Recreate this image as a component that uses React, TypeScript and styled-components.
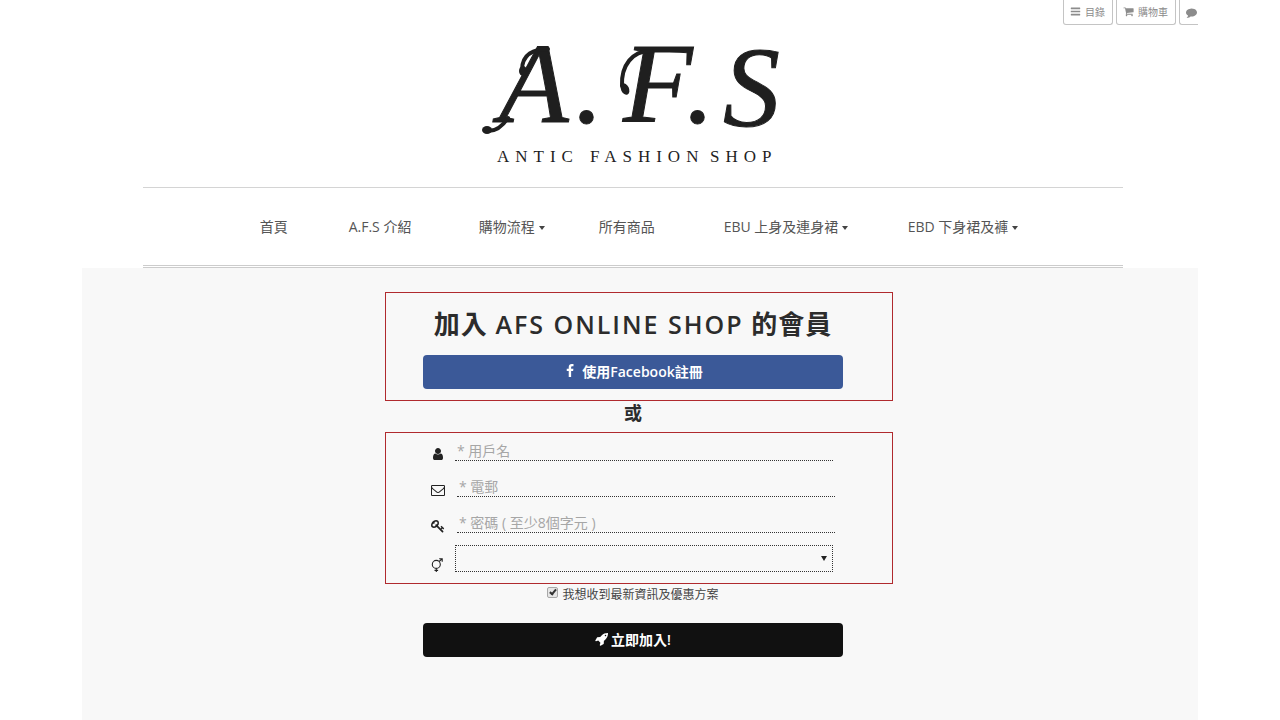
import React from "react";
import styled, { createGlobalStyle } from "styled-components";

const GlobalStyle = createGlobalStyle`
  *, *::before, *::after { box-sizing: border-box; }
  body {
    margin: 0;
    background: #fff;
    color: #333;
    font-family: "Open Sans", "Noto Sans CJK TC", sans-serif;
    font-size: 14px;
  }
  button, input, select { font-family: inherit; }
`;

const Frame = styled.div`
  display: flex;
  flex-direction: column;
  width: calc(100% - 164px);
  min-height: 100vh;
  margin: 0 auto;
`;

const Toolbar = styled.div`
  display: flex;
  justify-content: flex-end;
  gap: 3px;
  overflow: hidden;
`;

const ToolButton = styled.button<{ $cut?: boolean }>`
  display: flex;
  align-items: center;
  gap: 4px;
  height: 25px;
  padding: 0 7px 2px 6px;
  border: 1px solid #c4c4c4;
  border-top: 0;
  border-right-width: ${(p) => (p.$cut ? 0 : 1)}px;
  border-radius: ${(p) => (p.$cut ? "0 0 0 3px" : "0 0 3px 3px")};
  background: #fff;
  color: #8c8c8c;
  font-size: 10px;
  white-space: nowrap;
  ${(p) => p.$cut && "width: 19px; padding: 0 0 0 6px;"}
`;

const Header = styled.header`
  width: 100%;
  max-width: 994px;
  margin: 0 auto;
  padding-right: 14px;
`;

const LogoLink = styled.a`
  display: block;
  width: 310px;
  margin: 15px auto 19px;
`;

const Logo = styled.svg`
  display: block;
  width: 100%;
  height: auto;
  overflow: visible;
  fill: #1f1f1f;
  font-family: "Liberation Serif", serif;
`;

const Nav = styled.nav`
  display: grid;
  grid-template-columns: 89px 130px 120px 125px 184px auto;
  justify-content: center;
  align-items: center;
  height: 81px;
  padding-left: 12px;
  border-top: 1px solid #d4d4d4;
  border-bottom: 3px double #ccc;
`;

const NavLink = styled.a`
  display: flex;
  align-items: center;
  gap: 4px;
  color: #555;
  font-size: 14px;
  line-height: 20px;
  text-decoration: none;
  white-space: nowrap;
`;

const Caret = styled.span`
  margin-top: 2px;
  border: 3px solid transparent;
  border-top: 4px solid #444;
  border-bottom: 0;
`;

const Main = styled.main`
  display: flex;
  flex: 1;
  flex-direction: column;
  align-items: center;
  padding: 24px 2px 63px 0;
  background: #f8f8f8;
`;

const Form = styled.form`
  width: 508px;
  max-width: 100%;
`;

const Panel = styled.section`
  border: 1px solid #b02a2e;
  padding: 8px 49px 11px 37px;
`;

const Title = styled.h1`
  height: 50px;
  margin: 0 0 4px;
  padding: 2px 0 0;
  color: #2c2c2c;
  font-size: 26px;
  font-weight: 700;
  line-height: 42px;
  letter-spacing: 1px;
  text-align: center;
  white-space: nowrap;
`;

const Latin = styled.span`
  font-size: 25px;
  font-weight: 600;
  letter-spacing: 2px;
`;

const WideButton = styled.button<{ $color: string; $gap: number }>`
  display: flex;
  align-items: center;
  justify-content: center;
  gap: ${(p) => p.$gap}px;
  width: 100%;
  height: 34px;
  padding: 0 0 3px;
  border: 0;
  border-radius: 4px;
  background: ${(p) => p.$color};
  color: #fff;
  font-size: 14px;
  font-weight: 600;
`;

const Or = styled.p`
  margin: 0;
  padding: 0 50px 0 38px;
  color: #2c2c2c;
  font-size: 18px;
  font-weight: 700;
  line-height: 24px;
  height: 31px;
  text-align: center;
`;

const Field = styled.label<{ $gap: number; $after: number }>`
  display: flex;
  align-items: flex-end;
  gap: ${(p) => p.$gap}px;
  margin: 0 0 ${(p) => p.$after}px 8px;
  color: #222;
`;

const fieldWidth = "378px";

const TextInput = styled.input`
  width: ${fieldWidth};
  height: 20px;
  padding: 0 2px;
  border: 0;
  border-bottom: 1px dotted #333;
  border-radius: 0;
  background: transparent;
  color: #333;
  font-size: 14px;
  outline: none;
  &::placeholder { color: #a6a6a6; opacity: 1; }
`;

const SelectBox = styled.span`
  position: relative;
  display: block;
  width: ${fieldWidth};
  &::after {
    content: "";
    position: absolute;
    top: 11px;
    right: 6px;
    border: 3px solid transparent;
    border-top: 5px solid #222;
    border-bottom: 0;
    pointer-events: none;
  }
`;

const Select = styled.select`
  appearance: none;
  display: block;
  width: 100%;
  height: 27px;
  border: 1px dotted #333;
  border-radius: 0;
  background: transparent;
  font-size: 14px;
`;

const Newsletter = styled.label`
  display: flex;
  align-items: center;
  justify-content: center;
  gap: 4px;
  height: 20px;
  margin: 0 50px 19px 38px;
  color: #444;
  font-size: 12px;
`;

const Checkbox = styled.input`
  appearance: none;
  display: flex;
  justify-content: center;
  width: 11px;
  height: 11px;
  margin: 0 0 3px;
  border: 1px solid #a8a8a8;
  border-radius: 2px;
  background: #e6e6e6;
  &:checked::after {
    content: "";
    width: 4px;
    height: 7px;
    border: solid #333;
    border-width: 0 2px 2px 0;
    transform: rotate(40deg);
  }
`;

const Submit = styled.div`
  padding: 0 50px 0 38px;
`;

const Glyph = styled.svg<{ $size: number }>`
  flex: none;
  display: block;
  width: ${(p) => p.$size}px;
  height: ${(p) => p.$size}px;
  fill: currentColor;
`;

const shapes = {
  bars: "M1664 1344v128q0 26-19 45t-45 19h-1408q-26 0-45-19t-19-45v-128q0-26 19-45t45-19h1408q26 0 45 19t19 45zm0-512v128q0 26-19 45t-45 19h-1408q-26 0-45-19t-19-45v-128q0-26 19-45t45-19h1408q26 0 45 19t19 45zm0-512v128q0 26-19 45t-45 19h-1408q-26 0-45-19t-19-45v-128q0-26 19-45t45-19h1408q26 0 45 19t19 45z",
  cart: "M704 1536q0 52-38 90t-90 38-90-38-38-90 38-90 90-38 90 38 38 90zm896 0q0 52-38 90t-90 38-90-38-38-90 38-90 90-38 90 38 38 90zm128-1088v512q0 24-16.5 42.5t-40.5 21.5l-1044 122q13 60 13 70 0 16-24 64h920q26 0 45 19t19 45-19 45-45 19h-1024q-26 0-45-19t-19-45q0-11 8-31.5t16-36 21.5-40 15.5-29.5l-177-823h-204q-26 0-45-19t-19-45 19-45 45-19h256q16 0 28.5 6.5t19.5 15.5 13 24.5 8 26 5.5 29.5 4.5 26h1201q26 0 45 19t19 45z",
  comment: "M1792 896q0 174-120 321.5t-326 233-450 85.5q-70 0-145-8-198 175-460 242-49 14-114 22-17 2-30.5-9t-17.5-29v-1q-3-4-.5-12t2-10 4.5-9.5l6-9 7-8.5 8-9q7-8 31-34.5t34.5-38 31-39.5 32.5-51 27-59 26-76q-157-89-247.5-220t-90.5-281q0-130 71-248.5t191-204.5 286-136.5 348-50.5q244 0 450 85.5t326 233 120 321.5z",
  facebook: "M1343 12v264h-157q-86 0-116 36t-30 108v189h293l-39 296h-254v759h-306v-759h-255v-296h255v-218q0-186 104-288.5t277-102.5q147 0 228 12z",
  user: "M1536 1399q0 109-62.5 187t-150.5 78h-854q-88 0-150.5-78t-62.5-187q0-85 8.5-160.5t31.5-152 58.5-131 94-89 134.5-34.5q131 128 313 128t313-128q76 0 134.5 34.5t94 89 58.5 131 31.5 152 8.5 160.5zm-256-887q0 159-112.5 271.5t-271.5 112.5-271.5-112.5-112.5-271.5 112.5-271.5 271.5-112.5 271.5 112.5 112.5 271.5z",
  envelope: "M1664 1504v-768q-32 36-69 66-268 206-426 338-51 43-83 67t-86.5 48.5-102.5 24.5h-2q-48 0-102.5-24.5t-86.5-48.5-83-67q-158-132-426-338-37-30-69-66v768q0 13 9.5 22.5t22.5 9.5h1472q13 0 22.5-9.5t9.5-22.5zm0-1051v-24.5l-.5-13-3-12.5-5.5-9-9-7.5-14-2.5h-1472q-13 0-22.5 9.5t-9.5 22.5q0 168 147 284 193 152 401 317 6 5 35 29.5t46 37.5 44.5 31.5 50.5 27.5 43 9h2q20 0 43-9t50.5-27.5 44.5-31.5 46-37.5 35-29.5q208-165 401-317 54-43 100.5-115.5t46.5-131.5zm128-37v1088q0 66-47 113t-113 47h-1472q-66 0-113-47t-47-113v-1088q0-66 47-113t113-47h1472q66 0 113 47t47 113z",
  key: "M832 512q0-80-56-136t-136-56-136 56-56 136q0 42 19 83-41-19-83-19-80 0-136 56t-56 136 56 136 136 56 136-56 56-136q0-42-19-83 41 19 83 19 80 0 136-56t56-136zm851 704q0 17-49 66t-66 49q-9 0-28.5-16t-36.5-33-38.5-40-24.5-26l-96 96 220 220q28 28 28 68 0 42-39 81t-81 39q-40 0-68-28l-671-671q-176 131-365 131-163 0-265.5-102.5t-102.5-265.5q0-160 95-313t248-248 313-95q163 0 265.5 102.5t102.5 265.5q0 189-131 365l355 355 96-96q-3-3-26-24.5t-40-38.5-33-36.5-16-28.5q0-17 49-66t66-49q13 0 23 10 6 6 46 44.5t82 79.5 86.5 86 73 78 28.5 41z",
  rocket: "M1440 448q0-40-28-68t-68-28-68 28-28 68 28 68 68 28 68-28 28-68zm224-288q0 249-75.5 430.5t-253.5 360.5q-81 80-195 176l-20 379q-2 16-16 26l-384 224q-7 4-16 4-12 0-23-9l-64-64q-13-14-8-32l85-276-281-281-276 85q-3 1-9 1-14 0-23-9l-64-64q-17-19-5-39l224-384q10-14 26-16l379-20q96-114 176-195 188-187 358-258t431-71q14 0 24 9.5t10 22.5z",
};

function Icon({ name, size }: { name: keyof typeof shapes; size: number }) {
  return (
    <Glyph $size={size} viewBox="0 0 1792 1792" aria-hidden="true">
      <path d={shapes[name]} />
    </Glyph>
  );
}

function GenderIcon() {
  return (
    <Glyph $size={14} viewBox="0 0 14 14" aria-hidden="true">
      <g fill="none" stroke="currentColor" strokeWidth="1.1">
        <circle cx="5.3" cy="6.4" r="4" />
        <path d="M8.2 3.5 11 .9M8.2 .8h3v3M5.3 10.4V14M3.5 12.4h3.6" />
      </g>
    </Glyph>
  );
}

const links = [
  { label: "首頁" },
  { label: "A.F.S 介紹" },
  { label: "購物流程", menu: true },
  { label: "所有商品" },
  { label: "EBU 上身及連身裙", menu: true },
  { label: "EBD 下身裙及褲", menu: true },
];

export default function App() {
  return (
    <>
      <GlobalStyle />
      <Frame>
        <Toolbar>
          <ToolButton type="button"><Icon name="bars" size={11} />目錄</ToolButton>
          <ToolButton type="button"><Icon name="cart" size={11} />購物車</ToolButton>
          <ToolButton type="button" $cut aria-label="Message"><Icon name="comment" size={11} /></ToolButton>
        </Toolbar>
        <Header>
          <LogoLink href="#" aria-label="A.F.S Antic Fashion Shop">
            <Logo viewBox="478 40 310 128">
              <text y="122" fontStyle="italic" fontSize="114" stroke="#1f1f1f" strokeWidth="1" x="499 575 623 686 723" dy="0 0 0 0 4">A.F.S</text>
              {/* flourishes on the first two letters */}
              <g fill="none" stroke="#1f1f1f" strokeWidth="4" strokeLinecap="round">
                <path d="M548 49C534 49 522 54 522 70" />
                <path d="M508 118C502 127 495 132 486 131" />
                <path d="M652 51C632 50 621 66 622 86" />
              </g>
              <ellipse cx="523" cy="71" rx="4" ry="5" />
              <ellipse cx="487" cy="130" rx="5" ry="4" />
              <ellipse cx="625" cy="89" rx="4" ry="6" transform="rotate(-25 625 89)" />
              <text y="162" fontSize="17" letterSpacing="6">
                <tspan x="497">ANTIC</tspan> <tspan x="590">FASHION</tspan> <tspan x="710">SHOP</tspan>
              </text>
            </Logo>
          </LogoLink>
          <Nav>
            {links.map((l) => (
              <NavLink href="#" key={l.label}>{l.label}{l.menu && <Caret />}</NavLink>
            ))}
          </Nav>
        </Header>
        <Main>
          <Form onSubmit={(e) => e.preventDefault()}>
            <Panel>
              <Title>加入 <Latin>AFS ONLINE SHOP</Latin> 的會員</Title>
              <WideButton type="button" $color="#3b5998" $gap={5}>
                <Icon name="facebook" size={14} />使用Facebook註冊
              </WideButton>
            </Panel>
            <Or>或</Or>
            <Panel>
              <Field $gap={10} $after={16}>
                <Icon name="user" size={14} />
                <TextInput type="text" placeholder="* 用戶名" aria-label="用戶名" />
              </Field>
              <Field $gap={12} $after={16}>
                <Icon name="envelope" size={14} />
                <TextInput type="email" placeholder="* 電郵" aria-label="電郵" />
              </Field>
              <Field $gap={12} $after={12}>
                <Icon name="key" size={14} />
                <TextInput type="password" placeholder="* 密碼 ( 至少8個字元 )" aria-label="密碼" />
              </Field>
              <Field $gap={10} $after={0}>
                <GenderIcon />
                <SelectBox>
                  <Select aria-label="性別"><option value=""></option></Select>
                </SelectBox>
              </Field>
            </Panel>
            <Newsletter>
              <Checkbox type="checkbox" defaultChecked />我想收到最新資訊及優惠方案
            </Newsletter>
            <Submit>
              <WideButton type="submit" $color="#111" $gap={2}>
                <Icon name="rocket" size={14} />立即加入!
              </WideButton>
            </Submit>
          </Form>
        </Main>
      </Frame>
    </>
  );
}
